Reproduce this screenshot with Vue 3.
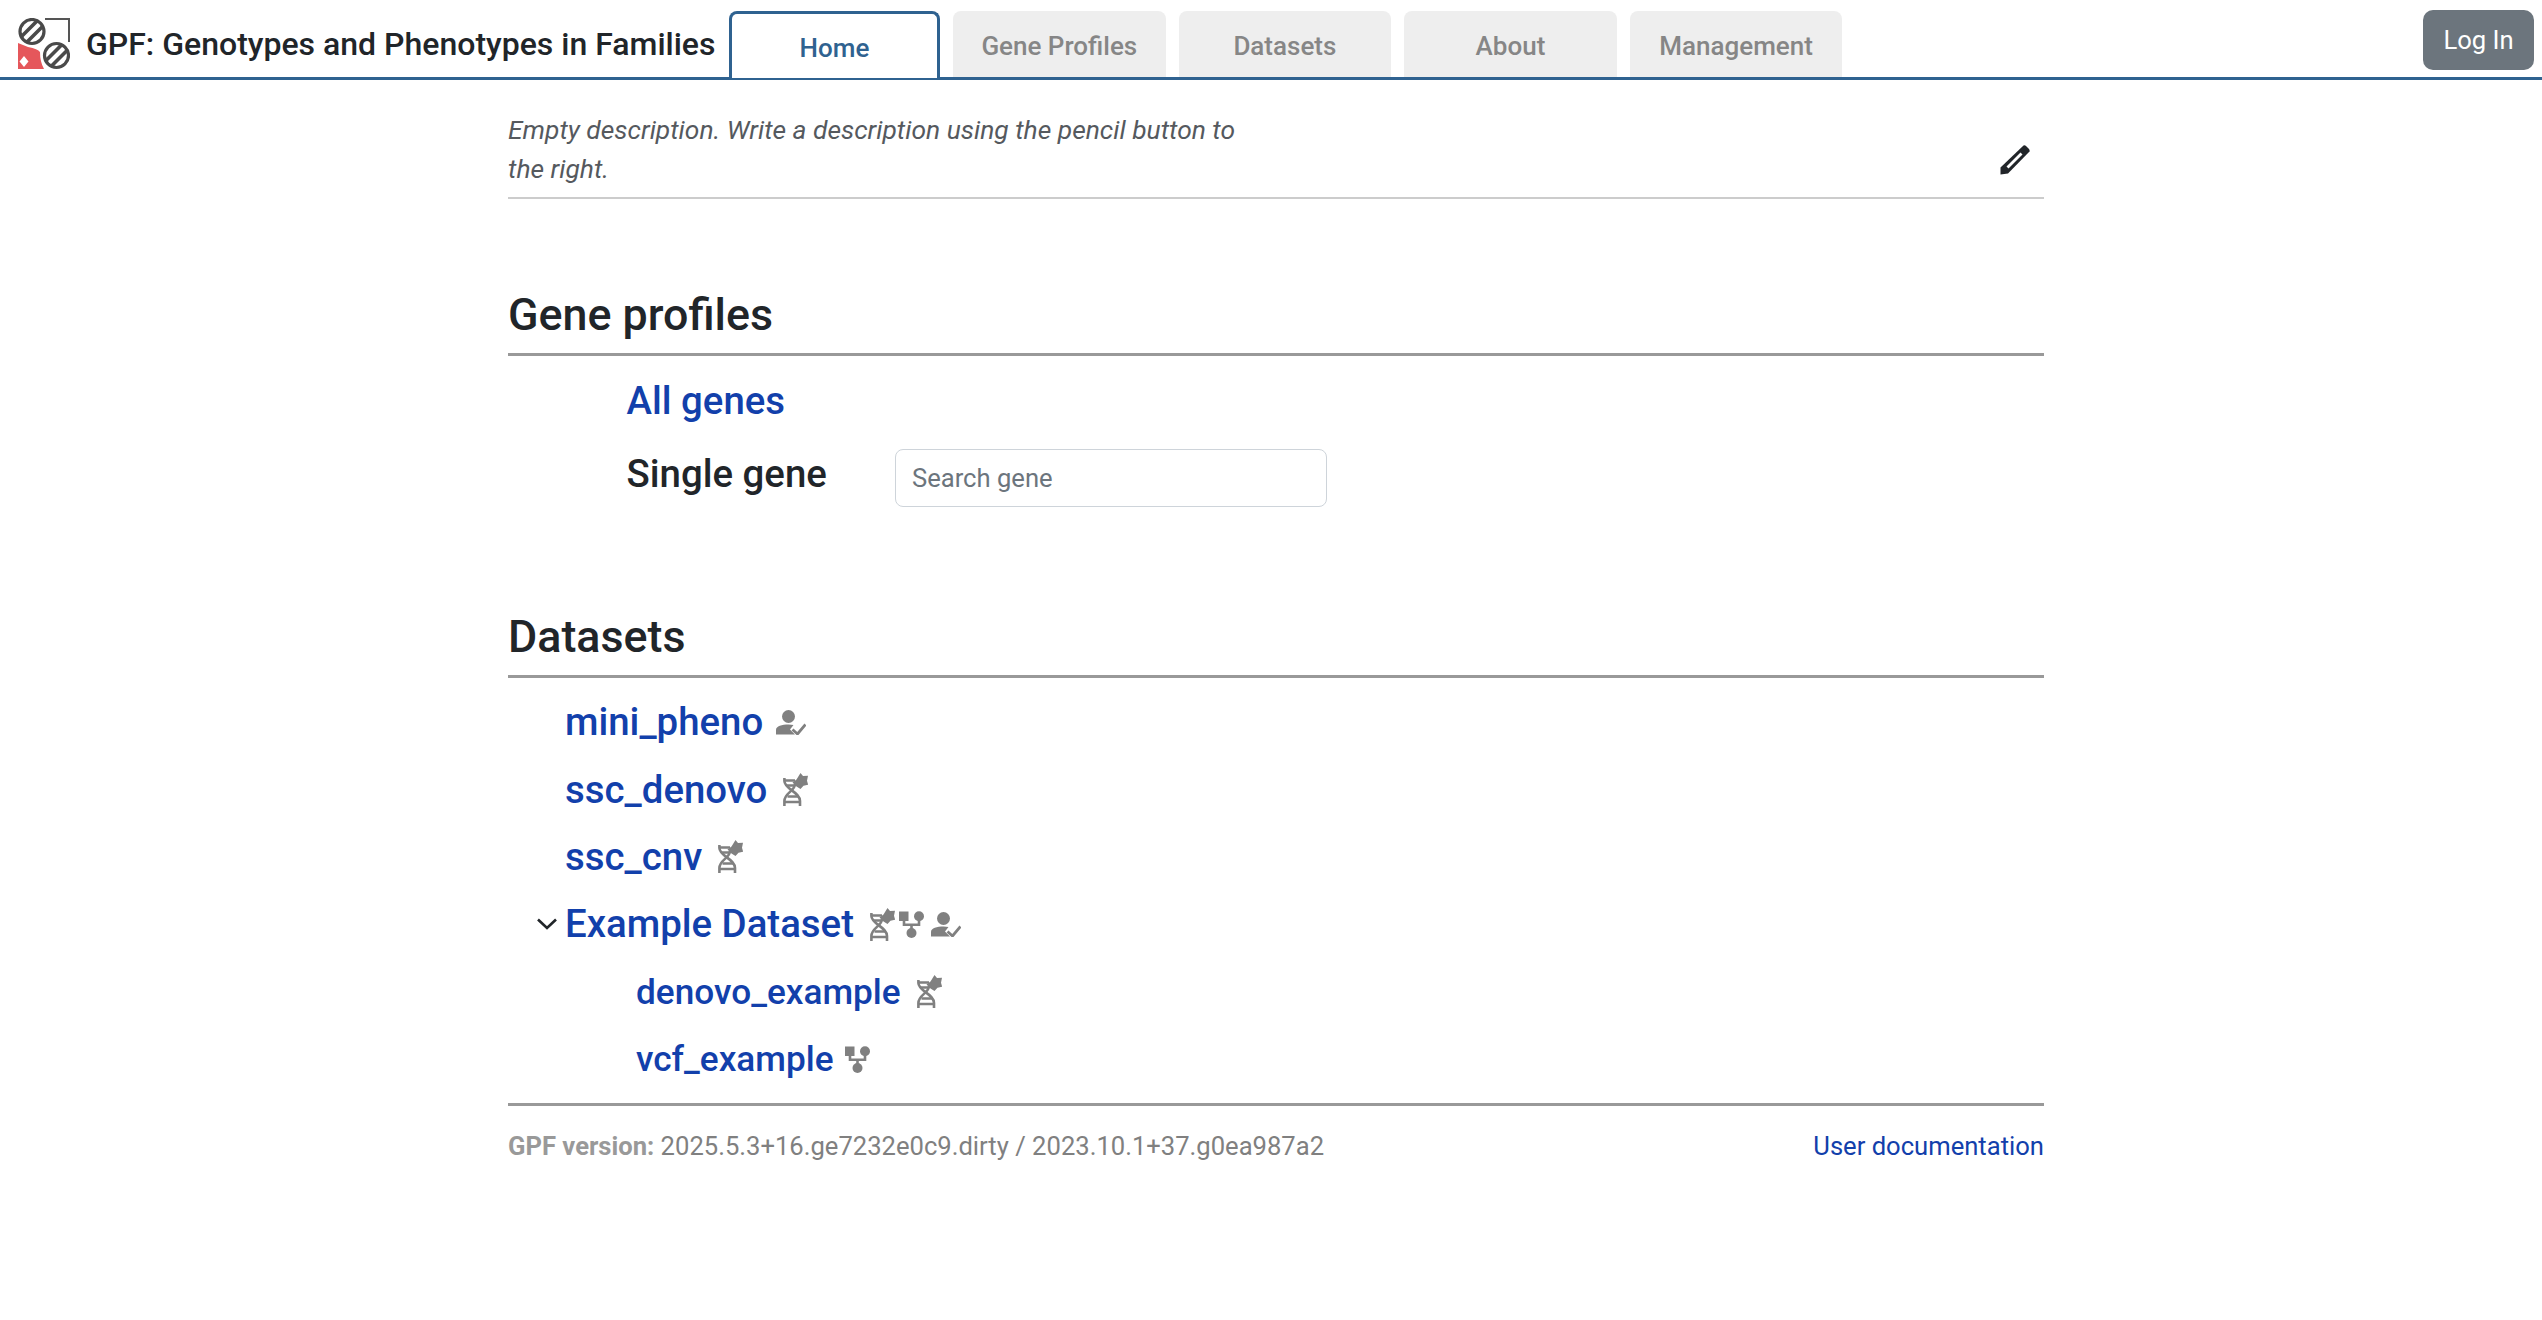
<script setup>
const tabs = ['Gene Profiles', 'Datasets', 'About', 'Management']
const datasets = [
  { name: 'mini_pheno', level: 0, icons: ['pheno'] },
  { name: 'ssc_denovo', level: 0, icons: ['dna'] },
  { name: 'ssc_cnv', level: 0, icons: ['dna'] },
  { name: 'Example Dataset', level: 0, open: true, icons: ['dna', 'tree', 'pheno'] },
  { name: 'denovo_example', level: 1, icons: ['dna'] },
  { name: 'vcf_example', level: 1, icons: ['tree'] },
]
</script>

<template>
  <div class="page">
    <header class="navbar">
      <div class="brand">
        <svg class="logo" viewBox="0 0 52 52" width="52" height="52">
          <path d="M0 25 L10 29 Q20 31 22 34 Q22 44 26 51 L0 51 Z" fill="#e5575b" />
          <path d="M6 38 L10.5 43.5 L6 49 L1.5 43.5 Z" fill="#fff" />
          <path d="M27 1 H51 V24" fill="none" stroke="#555" stroke-width="2" />
          <defs>
            <clipPath id="lens-a"><circle cx="14" cy="13.5" r="12" /></clipPath>
            <clipPath id="lens-b"><circle cx="38.5" cy="37.5" r="12" /></clipPath>
          </defs>
          <g fill="none" stroke="#4a4a4a">
            <circle cx="14" cy="13.5" r="12" stroke-width="3.2" fill="#fff" />
            <circle cx="38.5" cy="37.5" r="12" stroke-width="3.2" fill="#fff" />
            <g clip-path="url(#lens-a)" stroke-width="3.6">
              <path d="M1 21 L21 1 M6 27 L27 6" />
            </g>
            <g clip-path="url(#lens-b)" stroke-width="3.6">
              <path d="M25 45.5 L45.5 25 M31 50.5 L51 30.5" />
            </g>
          </g>
        </svg>
        <span class="brand-name">GPF: Genotypes and Phenotypes in Families</span>
      </div>
      <nav class="tabs">
        <a class="tab active">Home</a>
        <a v-for="t in tabs" :key="t" class="tab">{{ t }}</a>
      </nav>
      <button class="login">Log In</button>
    </header>

    <main class="content">
      <div class="description">
        <p class="desc-text">Empty description. Write a description using the pencil button to the right.</p>
        <svg class="pencil" viewBox="0 0 30 30" width="30" height="30">
          <path d="M23.5 0.5 Q25 0 26 1 L29 4 Q30 5 29.5 6.5 L8 28.5 L0.5 29.5 L0.5 22.5 Z" fill="#212529" />
          <path d="M20.5 7.5 L22.5 9.5 L8.5 23.5 L6.5 21.5 Z" fill="#fff" />
        </svg>
      </div>

      <section class="block profiles">
        <h2 class="heading">Gene profiles</h2>
        <div class="profile-body">
          <a class="link big">All genes</a>
          <div class="single">
            <span class="single-label">Single gene</span>
            <input class="search" placeholder="Search gene" />
          </div>
        </div>
      </section>

      <section class="block datasets">
        <h2 class="heading">Datasets</h2>
        <ul class="tree">
          <li v-for="d in datasets" :key="d.name" class="row" :class="{ nested: d.level === 1 }">
            <svg v-if="d.open" class="chevron" viewBox="0 0 22 14" width="22" height="14">
              <path d="M2 2.5 L11 11 L20 2.5" fill="none" stroke="#212529" stroke-width="2.6" />
            </svg>
            <a class="link ds">{{ d.name }}</a>
            <span class="icons">
              <template v-for="(ic, i) in d.icons" :key="i">
                <svg v-if="ic === 'dna'" class="ic dna" viewBox="0 0 25 33" width="25" height="33">
                  <g fill="none" stroke="#808080" stroke-width="2.6">
                    <path d="M1.4 5 V8 C1.4 16 17 19 17 28 V33" />
                    <path d="M12 11 C12 18 1.4 20 1.4 28 V33" />
                    <path d="M1 7.5 H12 M4 12.5 H12 M4.5 23.5 H15 M1.5 29 H17" />
                  </g>
                  <path d="M17.5 0 L20 3 L25 2.8 L24 7.8 L25.2 11.8 L20.5 12.8 L17.5 16 L13.5 13.5 L9.5 9.5 L13.5 6.5 Z" fill="#808080" />
                </svg>
                <svg v-else-if="ic === 'tree'" class="ic net" viewBox="0 0 25 27" width="25" height="27">
                  <g fill="#808080">
                    <rect x="0" y="0.5" width="9.5" height="9.5" />
                    <circle cx="20" cy="5.2" r="5" />
                    <circle cx="12.5" cy="22" r="5" />
                  </g>
                  <path d="M5 9 V13.8 H20 V9 M12.5 13.8 V19" fill="none" stroke="#808080" stroke-width="2.6" />
                </svg>
                <svg v-else class="ic pheno" viewBox="0 0 30 25" width="30" height="25">
                  <circle cx="12.5" cy="6.5" r="6.5" fill="#808080" />
                  <path d="M0 24.5 V20 C0 16 6 14.5 12.5 14.5 C14.5 14.5 16 14.7 17.5 15 L14 19.5 L19 24.5 Z" fill="#808080" />
                  <path d="M16.5 19.5 L21.5 24 L29.5 14.5" fill="none" stroke="#808080" stroke-width="2.8" />
                </svg>
              </template>
            </span>
          </li>
        </ul>
      </section>

      <footer class="foot">
        <span class="version"><b>GPF version:</b> 2025.5.3+16.ge7232e0c9.dirty / 2023.10.1+37.g0ea987a2</span>
        <a class="doc">User documentation</a>
      </footer>
    </main>
  </div>
</template>

<style>
html, body { margin: 0; background: #fff; }
</style>

<style scoped>
.page {
  font-family: Roboto, "Liberation Sans", sans-serif;
  color: #212529;
  min-height: 1320px;
}
.navbar {
  display: flex;
  align-items: flex-end;
  height: 77px;
  border-bottom: 3px solid #2f6290;
}
.brand {
  display: flex;
  align-items: center;
  padding: 10px 0 0 18px;
  height: 77px;
  width: 729px;
  box-sizing: border-box;
  gap: 16px;
}
.logo { flex: none; }
.brand-name { font-size: 32px; font-weight: 500; white-space: nowrap; color: #212529; }
.tabs { display: flex; gap: 13px; }
.tab {
  box-sizing: border-box;
  width: 212.6px;
  height: 66px;
  padding-top: 3px;
  display: flex;
  align-items: center;
  justify-content: center;
  background: #eeeeee;
  color: #868686;
  font-size: 26px;
  font-weight: 500;
  border-radius: 8px 8px 0 0;
}
.tab.active {
  width: 211px;
  height: 67px;
  margin-bottom: -3px;
  background: #fff;
  color: #2f6290;
  border: 3px solid #2f6290;
  border-bottom: 0;
  border-radius: 8px 8px 0 0;
  padding-top: 4px;
}
.login {
  margin-left: auto;
  margin-right: 8px;
  align-self: flex-start;
  margin-top: 10px;
  width: 111px;
  height: 60px;
  background: #6c757d;
  color: #fff;
  border: 0;
  border-radius: 10px;
  font: 400 25.6px Roboto, sans-serif;
}
.content {
  width: 1536px;
  margin-left: 508px;
}
.description {
  display: flex;
  justify-content: space-between;
  align-items: flex-end;
  padding-bottom: 8px;
  box-sizing: border-box;
  height: 119px;
  border-bottom: 2px solid #cccccc;
}
.desc-text {
  margin: 0;
  width: 760px;
  font-style: italic;
  font-size: 26.4px;
  line-height: 39px;
  color: #55595e;
}
.pencil { margin-right: 14px; margin-bottom: 14px; }
.heading {
  margin: 0;
  font-size: 44.8px;
  line-height: 54px;
  font-weight: 500;
  padding-bottom: 11px;
  border-bottom: 3px solid #999999;
  color: #212529;
}
.profiles { margin-top: 89px; }
.profile-body { padding: 22px 0 0 118.5px; display: flex; flex-direction: column; align-items: flex-start; }
.link { color: #1240ab; font-weight: 500; text-decoration: none; }
.big { font-size: 38.4px; line-height: 46px; }
.single { display: flex; align-items: center; margin-top: 25px; }
.single-label { font-size: 38.4px; font-weight: 500; width: 268.5px; margin-top: -10px; }
.search {
  box-sizing: border-box;
  width: 432px;
  height: 58px;
  border: 1.6px solid #ced4da;
  border-radius: 8px;
  padding: 0 16px;
  font: 400 25.6px Roboto, sans-serif;
  color: #555;
  outline: none;
}
.search::placeholder { color: #6c757d; opacity: 1; }
.datasets { margin-top: 103px; }
.tree { list-style: none; margin: 10.5px 0 0; padding: 0 0 0 57px; }
.row {
  display: flex;
  align-items: center;
  height: 67.4px;
  position: relative;
}
.row.nested { padding-left: 71px; }
.row.nested .ds { font-size: 35.2px; }
.ds { font-size: 38.4px; line-height: 46px; white-space: nowrap; }
.chevron { position: absolute; left: -29px; top: 26px; }
.icons { display: inline-flex; align-items: center; margin-left: 13px; gap: 4px; }
.dna { margin-left: 3px; }
.net:first-child { margin-left: -1.5px; }
.pheno:not(:first-child) { margin-left: 3px; }
.foot {
  margin-top: 10px;
  border-top: 3px solid #999999;
  display: flex;
  justify-content: space-between;
  padding-top: 24px;
  font-size: 25.6px;
  line-height: 32px;
  color: #808080;
}
.version b { font-weight: 700; color: #999999; }
.doc { color: #1240ab; }
</style>
